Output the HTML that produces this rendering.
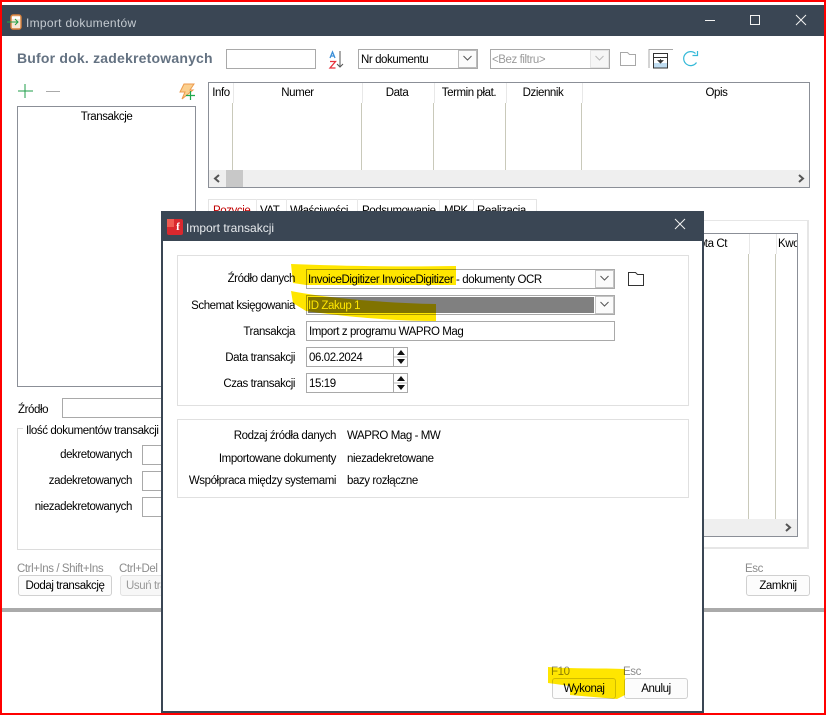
<!DOCTYPE html>
<html lang="pl"><head><meta charset="utf-8"><title>Import dokumentów</title>
<style>
html,body{margin:0;padding:0;background:#fff}
#p{position:relative;width:826px;height:715px;overflow:hidden;background:#fff;font-family:"Liberation Sans",sans-serif;font-size:11.5px;color:#000}
#p div,#p svg{position:absolute;box-sizing:border-box}
.t{white-space:nowrap;line-height:14px;height:15px;padding-top:1px;letter-spacing:-.42px}
.r{text-align:right}
.c{text-align:center}
.b{border:1px solid #a9a9a9;background:#fff}
.a{background:#fbfbfb;border:1px solid #c4c4c4}
.btn{border:1px solid #d0d0d0;border-radius:3px;background:#fcfcfc;text-align:center;line-height:21px;letter-spacing:-.42px;white-space:nowrap}
.h{color:#8c8c8c}
.s{background:#c9c9ba;width:1px}
.hs{background:#e8e8e8;width:1px}
.g{border:1px solid #e0e0e0}
</style></head><body><div id="p">

<!-- main window -->
<div style="left:2px;top:5px;width:822px;height:31px;background:#3a4654"></div>
<svg style="left:7px;top:13px" width="16" height="18" viewBox="0 0 16 18"><rect x="4" y="2" width="10" height="14" rx="2" fill="#f6e8d8" stroke="#d9803a" stroke-width="1.4"/><rect x="5" y="4" width="8" height="2" fill="#fff"/><path d="M0 9H11M8 6l3 3-3 3" fill="none" stroke="#21a045" stroke-width="1"/></svg>
<div class="t" style="left:26px;top:16px;padding:0;color:#c5cbd1;font-size:12px;letter-spacing:.3px">Import dokumentów</div>
<svg style="left:700px;top:10px" width="116" height="22" viewBox="0 0 116 22" fill="none" stroke="#f2f2f2" stroke-width="1"><path d="M5 10.500H15"/><rect x="50.500" y="5.500" width="9" height="9"/><path d="M96 5L106 15M106 5L96 15"/></svg>

<div class="t" style="left:17px;top:50px;height:17px;padding:0;line-height:17px;font-size:14px;font-weight:bold;color:#647282;letter-spacing:.2px">Bufor dok. zadekretowanych</div>
<div class="b" style="left:226px;top:49px;width:90px;height:20px"></div>
<svg style="left:328px;top:50px" width="18" height="20" viewBox="0 0 18 20" fill="none"><path d="M2 8L4.500 2L7 8M3 6H6" stroke="#3b8fd8" stroke-width="1.300"/><path d="M2 11.500H7.500L2 18H7.500" stroke="#e8323c" stroke-width="1.300"/><path d="M12 1V17M9 14l3 3 3-3" stroke="#555" stroke-width="1"/></svg>
<div class="b" style="left:358px;top:49px;width:120px;height:20px"></div>
<div class="t" style="left:361px;top:52px">Nr dokumentu</div>
<div class="a" style="left:458px;top:50px;width:19px;height:18px;border-color:#bbb"></div>
<svg style="left:462px;top:55px" width="11" height="7" fill="none" stroke="#555"><path d="M1.500 1L5.500 5L9.500 1"/></svg>
<div class="b" style="left:490px;top:49px;width:120px;height:20px"></div>
<div class="t" style="left:492px;top:52px;color:#9a9a9a">&lt;Bez filtru&gt;</div>
<div style="left:590px;top:50px;width:19px;height:18px;background:#f6f6f6;border:1px solid #e4e4e4"></div>
<svg style="left:594px;top:55px" width="11" height="7" fill="none" stroke="#bbb"><path d="M1.500 1L5.500 5L9.500 1"/></svg>
<svg style="left:620px;top:51px" width="17" height="16" fill="none" stroke="#a8a8a8"><path d="M.5 14.500V1.500H7.500L9.500 3.500H15.500V14.500Z"/></svg>
<svg style="left:648px;top:48px" width="26" height="22" fill="none"><path d="M1 20V1.500H25" stroke="#a8a8a8"/><rect x="5.500" y="5.500" width="14" height="14.500" fill="#fff" stroke="#333"/><rect x="6" y="15" width="13" height="4.500" fill="#bfdcf0"/><path d="M6 9.500H19" stroke="#333"/><path d="M12.500 11V15M10 12.500H15L12.500 15Z" stroke="#333" fill="#333" stroke-width=".8"/></svg>
<svg style="left:682px;top:50px" width="18" height="18" fill="none" stroke="#35b9d8" stroke-width="1.200"><path d="M14.500 12.500A7 7 0 1 1 13.500 3.500"/><path d="M15.500 1V5.500H10.500"/></svg>

<svg style="left:17px;top:83px" width="48" height="16" fill="none"><path d="M8 1V15M1 8H16" stroke="#1f9e49"/><path d="M29 8.500H43" stroke="#aaa"/></svg>
<svg style="left:179px;top:83px" width="18" height="18" fill="none"><path d="M5 1H15L11 7H14L3 16L6 9H1Z" fill="#fbcf8e" stroke="#ec9a4c"/><path d="M11.500 8V17M7 12.500H16" stroke="#1fa84c" stroke-width="1.200"/></svg>

<div style="left:17px;top:106px;width:179px;height:281px;border:1px solid #8b8f97"></div>
<div class="t c" style="left:18px;top:109px;width:177px">Transakcje</div>

<!-- top grid -->
<div style="left:208px;top:82px;width:602px;height:106px;border:1px solid #8b8f97"></div>
<div class="t c" style="left:209px;top:85px;width:24px">Info</div>
<div class="t c" style="left:233px;top:85px;width:129px">Numer</div>
<div class="t c" style="left:362px;top:85px;width:70px">Data</div>
<div class="t c" style="left:433px;top:85px;width:72px">Termin płat.</div>
<div class="t c" style="left:505px;top:85px;width:76px">Dziennik</div>
<div class="t c" style="left:582px;top:85px;width:269px">Opis</div>
<div class="hs" style="left:233px;top:83px;height:20px"></div><div class="hs" style="left:362px;top:83px;height:20px"></div><div class="hs" style="left:434px;top:83px;height:20px"></div><div class="hs" style="left:506px;top:83px;height:20px"></div><div class="hs" style="left:582px;top:83px;height:20px"></div>
<div class="s" style="left:232px;top:103px;height:67px"></div><div class="s" style="left:361px;top:103px;height:67px"></div><div class="s" style="left:433px;top:103px;height:67px"></div><div class="s" style="left:505px;top:103px;height:67px"></div><div class="s" style="left:581px;top:103px;height:67px"></div>
<div style="left:209px;top:170px;width:600px;height:17px;background:#efefef"></div>
<div style="left:226px;top:170px;width:17px;height:17px;background:#c8c8c8"></div>
<svg style="left:213px;top:174px" width="9" height="9" fill="none" stroke="#555" stroke-width="2"><path d="M6 1L2 4.500L6 8"/></svg>
<svg style="left:797px;top:174px" width="9" height="9" fill="none" stroke="#555" stroke-width="2"><path d="M2 1L6 4.500L2 8"/></svg>

<!-- tabs -->
<div style="left:208px;top:199px;width:329px;height:12px;border:1px solid #e4e4e4;border-bottom:0;overflow:hidden"></div>
<div class="hs" style="left:256px;top:199px;height:12px"></div><div class="hs" style="left:286px;top:199px;height:12px"></div><div class="hs" style="left:357px;top:199px;height:12px"></div><div class="hs" style="left:439px;top:199px;height:12px"></div><div class="hs" style="left:473px;top:199px;height:12px"></div>
<div class="t" style="left:213px;top:203px;color:#c00000">Pozycje</div>
<div class="t" style="left:260px;top:203px">VAT</div>
<div class="t" style="left:290px;top:203px">Właściwości</div>
<div class="t" style="left:362px;top:203px">Podsumowanie</div>
<div class="t" style="left:444px;top:203px">MPK</div>
<div class="t" style="left:477px;top:203px">Realizacja</div>

<!-- right panel behind -->
<div style="left:600px;top:220px;width:209px;height:329px;border:1px solid #e6e6e6;border-width:1px 2px 2px 1px"></div>
<div style="left:600px;top:233px;width:198px;height:304px;border:1px solid #8b8f97"></div>
<div class="t r" style="left:627px;top:236px;width:100px">Kwota Ct</div>
<div class="hs" style="left:749px;top:234px;height:20px"></div>
<div class="hs" style="left:776px;top:234px;height:20px"></div>
<div class="t" style="left:778px;top:236px;width:19px;overflow:hidden">Kwota</div>
<div class="s" style="left:748px;top:254px;height:265px"></div>
<div class="s" style="left:775px;top:254px;height:265px"></div>
<div style="left:601px;top:519px;width:196px;height:17px;background:#efefef"></div>
<svg style="left:784px;top:523px" width="9" height="9" fill="none" stroke="#555" stroke-width="2"><path d="M2 1L6 4.500L2 8"/></svg>

<!-- left lower -->
<div class="t" style="left:18px;top:402px">Źródło</div>
<div class="b" style="left:62px;top:398px;width:110px;height:20px"></div>
<div style="left:17px;top:428px;width:160px;height:122px;border:1px solid #dcdcdc"></div>
<div class="t" style="left:23px;top:423px;background:#fff;padding:1px 3px 0">Ilość dokumentów transakcji</div>
<div class="t r" style="left:0;top:447px;width:132px">dekretowanych</div>
<div class="t r" style="left:0;top:473px;width:132px">zadekretowanych</div>
<div class="t r" style="left:0;top:499px;width:132px">niezadekretowanych</div>
<div class="b" style="left:142px;top:445px;width:40px;height:20px"></div>
<div class="b" style="left:142px;top:471px;width:40px;height:20px"></div>
<div class="b" style="left:142px;top:497px;width:40px;height:20px"></div>
<div class="t h" style="left:17px;top:561px">Ctrl+Ins / Shift+Ins</div>
<div class="t h" style="left:119px;top:561px">Ctrl+Del</div>
<div class="btn" style="left:18px;top:575px;width:94px;height:21px">Dodaj transakcję</div>
<div class="btn" style="left:120px;top:575px;width:70px;height:21px;color:#9a9a9a;background:#f7f7f7;text-align:left;padding-left:5px;overflow:hidden;border-color:#e2e2e2">Usuń transakcję</div>
<div class="t h" style="left:745px;top:561px">Esc</div>
<div class="btn" style="left:746px;top:575px;width:64px;height:21px">Zamknij</div>
<div style="left:2px;top:608px;width:822px;height:4px;background:#aaa"></div>

<!-- dialog -->
<div style="left:161px;top:211px;width:543px;height:502px;background:#fff;border:2px solid #3a4654;border-top:0"></div>
<div style="left:161px;top:211px;width:543px;height:30px;background:#3a4654"></div>
<div style="left:167px;top:219px;width:16px;height:16px;background:#d9282e;border-radius:2px"></div>
<div style="left:167px;top:219px;width:7px;height:8px;background:#ef5b52"></div>
<div style="left:174px;top:221px;width:8px;height:13px;color:#fff;font:bold 11px/13px 'Liberation Serif',serif;text-align:center">f</div>
<div class="t" style="left:186px;top:221px;padding:0;color:#e8ebee;font-size:12px;letter-spacing:0">Import transakcji</div>
<svg style="left:674px;top:218px" width="12" height="12" fill="none" stroke="#f2f2f2"><path d="M1 1L11 11M11 1L1 11"/></svg>

<div class="g" style="left:177px;top:255px;width:512px;height:151px"></div>
<div class="t r" style="left:170px;top:271px;width:125px">Źródło danych</div>
<div class="t r" style="left:170px;top:298px;width:125px">Schemat księgowania</div>
<div class="t r" style="left:170px;top:324px;width:125px">Transakcja</div>
<div class="t r" style="left:170px;top:350px;width:125px">Data transakcji</div>
<div class="t r" style="left:170px;top:376px;width:125px">Czas transakcji</div>

<div class="b" style="left:306px;top:269px;width:309px;height:20px"></div>
<div class="t" style="left:308px;top:272px">InvoiceDigitizer InvoiceDigitizer - dokumenty OCR</div>
<div class="a" style="left:595px;top:270px;width:19px;height:18px"></div>
<svg style="left:599px;top:275px" width="11" height="7" fill="none" stroke="#555"><path d="M1.500 1L5.500 5L9.500 1"/></svg>
<svg style="left:627px;top:271px" width="18" height="16" fill="none" stroke="#333"><path d="M1.500 14.500V1.500H8.500L10.500 3.500H16.500V14.500Z"/></svg>

<div class="b" style="left:306px;top:295px;width:309px;height:20px"></div>
<div style="left:308px;top:297px;width:286px;height:16px;background:#808080"></div>
<div class="t" style="left:308px;top:298px;color:#fff">ID Zakup 1</div>
<div class="a" style="left:595px;top:296px;width:19px;height:18px"></div>
<svg style="left:599px;top:301px" width="11" height="7" fill="none" stroke="#555"><path d="M1.500 1L5.500 5L9.500 1"/></svg>

<div class="b" style="left:306px;top:321px;width:309px;height:20px"></div>
<div class="t" style="left:309px;top:324px">Import z programu WAPRO Mag</div>

<div class="b" style="left:306px;top:347px;width:88px;height:20px"></div>
<div class="t" style="left:309px;top:350px">06.02.2024</div>
<div style="left:394px;top:347px;width:14px;height:20px;border:1px solid #a9a9a9;border-left:0"></div>
<svg style="left:394px;top:347px" width="14" height="20"><path d="M7 3L11 8H3Z M3 12H11L7 17Z" fill="#111"/><path d="M0 10H14" stroke="#bbb"/></svg>
<div class="b" style="left:306px;top:373px;width:88px;height:20px"></div>
<div class="t" style="left:309px;top:376px">15:19</div>
<div style="left:394px;top:373px;width:14px;height:20px;border:1px solid #a9a9a9;border-left:0"></div>
<svg style="left:394px;top:373px" width="14" height="20"><path d="M7 3L11 8H3Z M3 12H11L7 17Z" fill="#111"/><path d="M0 10H14" stroke="#bbb"/></svg>

<div class="g" style="left:177px;top:419px;width:512px;height:79px"></div>
<div class="t r" style="left:170px;top:428px;width:166px">Rodzaj źródła danych</div>
<div class="t r" style="left:170px;top:451px;width:166px">Importowane dokumenty</div>
<div class="t r" style="left:170px;top:473px;width:166px">Współpraca między systemami</div>
<div class="t" style="left:347px;top:428px">WAPRO Mag - MW</div>
<div class="t" style="left:347px;top:451px">niezadekretowane</div>
<div class="t" style="left:347px;top:473px">bazy rozłączne</div>

<div class="t h" style="left:551px;top:664px">F10</div>
<div class="t h" style="left:623px;top:664px">Esc</div>
<div class="btn" style="left:552px;top:678px;width:64px;height:21px">Wykonaj</div>
<div class="btn" style="left:624px;top:678px;width:64px;height:21px">Anuluj</div>

<!-- highlighter -->
<svg style="left:0;top:0;mix-blend-mode:multiply" width="826" height="715"><g fill="#ffe600">
<path d="M291 264C340 266 400 267 456 266L456 285L306 285L293 283Z"/>
<path d="M291 291C320 297 380 303 436 304L436 321C390 321 340 316 306 311L293 303Z"/>
<path d="M548 667C575 669 600 668 625 669L625 695L617 699L570 695L570 686L548 683Z"/>
</g></svg>

<!-- screenshot red frame -->
<div style="left:0;top:0;width:826px;height:715px;border:2px solid #f00"></div>
</div></body></html>
